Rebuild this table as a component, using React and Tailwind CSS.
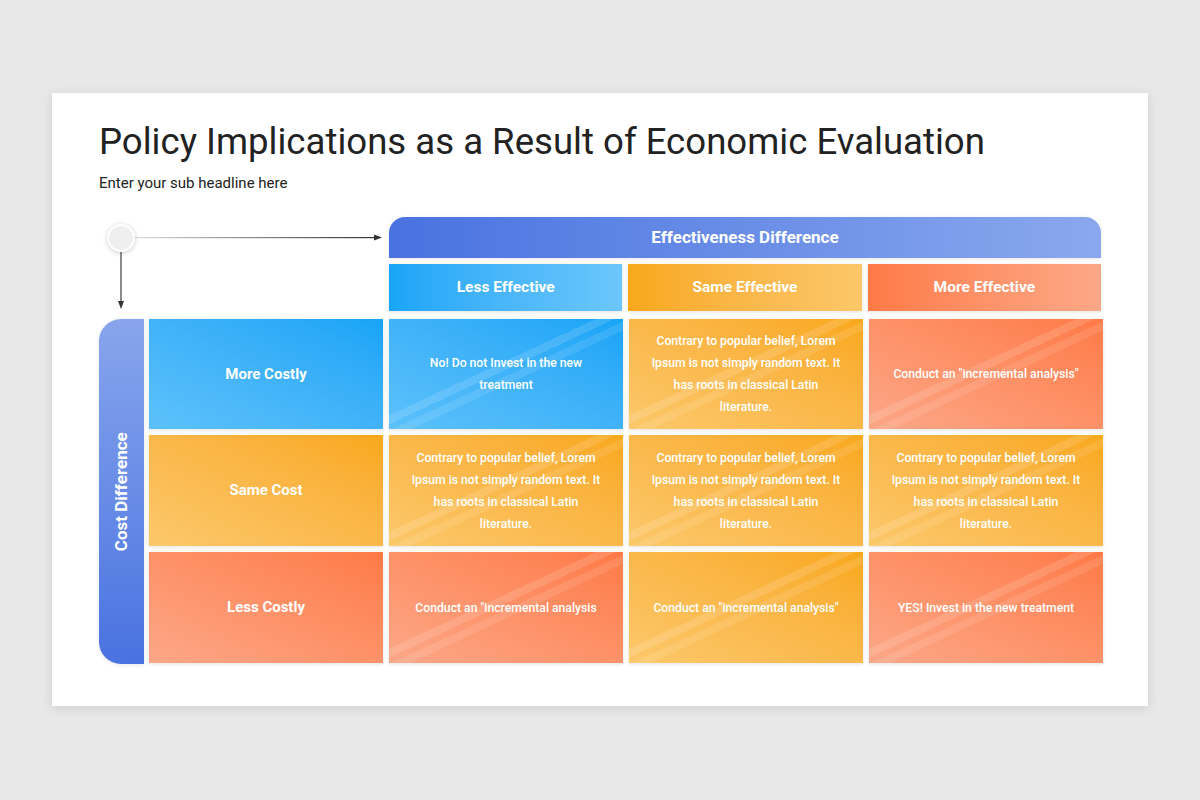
import React from "react";

const font = { fontFamily: "Roboto, 'Noto Sans', sans-serif" };

const stripes =
  "pointer-events-none absolute inset-0 bg-[linear-gradient(155deg,transparent_44%,rgba(255,255,255,0.13)_44%,rgba(255,255,255,0.13)_48%,transparent_48%,transparent_51%,rgba(255,255,255,0.1)_51%,rgba(255,255,255,0.1)_55%,transparent_55%)]";

const tone = {
  blue: "bg-linear-to-tr from-[#5cc1fb] to-[#16a4f6]",
  orange: "bg-linear-to-tr from-[#fcc86a] to-[#f9a81a]",
  coral: "bg-linear-to-tr from-[#fca787] to-[#fe7a46]",
};

const headerTone = {
  blue: "bg-linear-to-r from-[#17a5f7] to-[#6bc7fb]",
  orange: "bg-linear-to-r from-[#f9a81a] to-[#fbc768]",
  coral: "bg-linear-to-r from-[#fe7a46] to-[#fca887]",
};

const columns = [
  { label: "Less Effective", color: "blue" },
  { label: "Same Effective", color: "orange" },
  { label: "More Effective", color: "coral" },
];

const lorem =
  "Contrary to popular belief, Lorem Ipsum is not simply random text. It has roots in classical Latin literature.";

const rows = [
  {
    label: "More Costly",
    color: "blue",
    cells: [
      { text: "No! Do not Invest in the new treatment", color: "blue" },
      { text: lorem, color: "orange" },
      { text: 'Conduct an "incremental analysis"', color: "coral" },
    ],
  },
  {
    label: "Same Cost",
    color: "orange",
    cells: [
      { text: lorem, color: "orange" },
      { text: lorem, color: "orange" },
      { text: lorem, color: "orange" },
    ],
  },
  {
    label: "Less Costly",
    color: "coral",
    cells: [
      { text: 'Conduct an "incremental analysis', color: "coral" },
      { text: 'Conduct an "incremental analysis"', color: "orange" },
      { text: "YES! Invest in the new treatment", color: "coral" },
    ],
  },
];

function CornerArrows() {
  return (
    <div className="relative h-[94px] w-[290px] shrink-0">
      <svg className="absolute inset-0" width="290" height="94" viewBox="0 0 290 94">
        <defs>
          <linearGradient id="hline" gradientUnits="userSpaceOnUse" x1="34" y1="0" x2="280" y2="0">
            <stop offset="0" stopColor="#dcdcdc" />
            <stop offset="1" stopColor="#333333" />
          </linearGradient>
        </defs>
        <rect x="34" y="20" width="244" height="1.2" fill="url(#hline)" />
        <polygon points="283,20.6 275,17.6 275,23.6" fill="#333333" />
        <line x1="22" y1="34" x2="22" y2="86" stroke="#3f3f3f" strokeWidth="1.2" />
        <polygon points="22,92 19,84 25,84" fill="#333333" />
      </svg>
      <div className="absolute left-[8px] top-[7px] h-[28px] w-[28px] rounded-full border-2 border-white bg-[#efefef] shadow-[0_1px_5px_rgba(0,0,0,0.2)]" />
    </div>
  );
}

export default function App() {
  return (
    <div className="min-h-screen bg-[#e9e8e9] pt-[93px]" style={font}>
      <div className="mx-[52px] h-[613px] bg-white px-[47px] pt-[27px] shadow-[0_2px_10px_rgba(0,0,0,0.12)]">
        <h1 className="text-[36.6px] leading-[44px] font-normal text-[#222222]">
          Policy Implications as a Result of Economic Evaluation
        </h1>
        <p className="mt-[7px] text-[15px] leading-[24px] text-[#222222]">Enter your sub headline here</p>

        <div className="mt-[22px] flex flex-col gap-[8px]">
          <div className="flex">
            <CornerArrows />
            <div className="flex w-[713px] flex-col gap-[6px]">
              <div className="flex h-[41px] items-center justify-center rounded-t-[16px] bg-linear-to-r from-[#4a72e0] to-[#8aa8ed] text-[17px] font-bold text-white shadow-[0_1px_4px_rgba(0,0,0,0.1)]">
                Effectiveness Difference
              </div>
              <div className="grid h-[47px] grid-cols-3 gap-[6px]">
                {columns.map((c) => (
                  <div
                    key={c.label}
                    className={`flex items-center justify-center text-[15.5px] font-bold text-white shadow-[0_1px_4px_rgba(0,0,0,0.12)] ${headerTone[c.color]}`}
                  >
                    {c.label}
                  </div>
                ))}
              </div>
            </div>
          </div>

          <div className="flex gap-[5px]">
            <div className="flex h-[345px] w-[45px] shrink-0 items-center justify-center rounded-l-[22px] bg-linear-to-b from-[#88a5ec] to-[#4a72e0] shadow-[0_1px_4px_rgba(0,0,0,0.1)]">
              <span className="-rotate-90 whitespace-nowrap text-[17px] font-bold text-white">Cost Difference</span>
            </div>
            <div className="grid grid-cols-[234px_234px_234px_234px] grid-rows-[110px_111px_111px] gap-[6px]">
              {rows.map((r) => (
                <React.Fragment key={r.label}>
                  <div
                    className={`flex items-center justify-center text-[15px] font-bold text-white shadow-[0_1px_4px_rgba(0,0,0,0.12)] ${tone[r.color]}`}
                  >
                    {r.label}
                  </div>
                  {r.cells.map((cell, i) => (
                    <div
                      key={i}
                      className={`relative flex items-center justify-center px-[21px] text-center text-[12.2px] leading-[22px] font-medium text-white shadow-[0_1px_4px_rgba(0,0,0,0.12)] ${tone[cell.color]}`}
                    >
                      <div className={stripes} />
                      <span className="relative">{cell.text}</span>
                    </div>
                  ))}
                </React.Fragment>
              ))}
            </div>
          </div>
        </div>
      </div>
    </div>
  );
}
